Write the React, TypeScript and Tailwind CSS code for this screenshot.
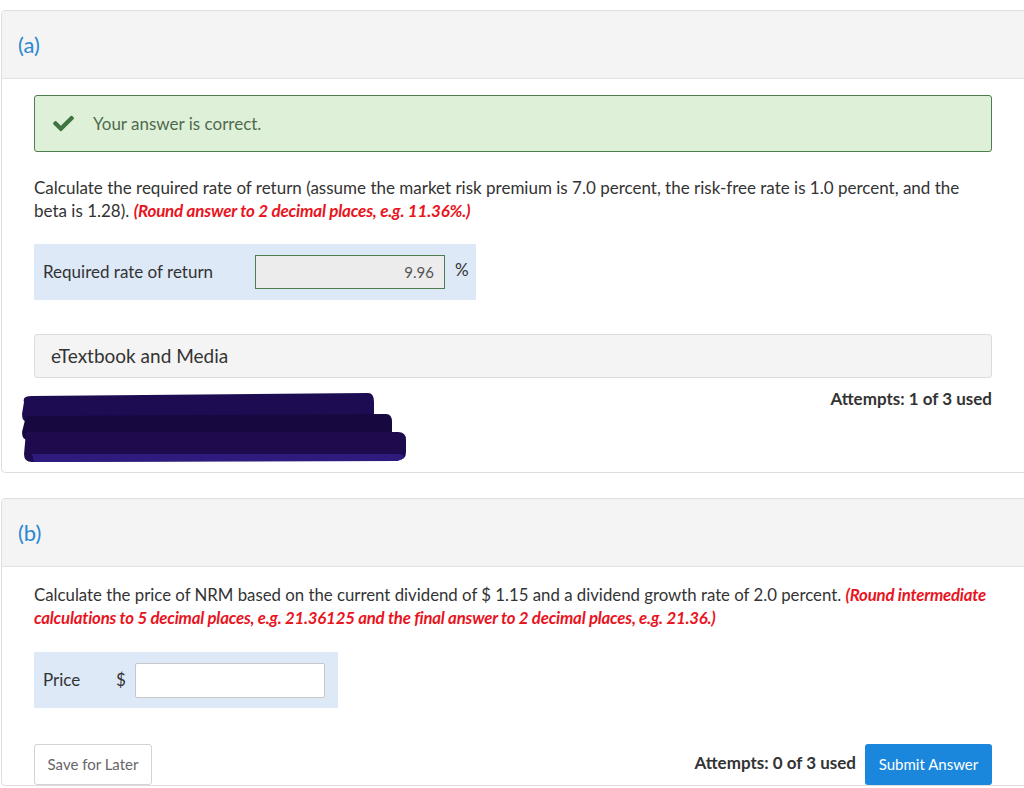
import { FaCheck } from 'react-icons/fa';

function Scribble() {
    // hand-drawn redaction marks over the student's name
    return (
        <svg width="400" height="72" viewBox="0 0 400 72" className="block">
            <path d="M6 10 Q4 4 14 4 L350 1 Q356 1 356 10 L356 22 Q356 28 350 28 L10 30 Q4 30 4 22 Z" fill="#1e0c52" />
            <path d="M8 24 L368 22 Q374 22 374 30 L374 40 Q374 46 368 46 L10 48 Q4 48 4 40 Z" fill="#170840" />
            <path d="M8 40 L380 40 Q388 40 388 48 L388 60 Q388 68 380 68 L14 70 Q6 70 6 62 Z" fill="#1d0b4d" />
            <path d="M14 62 L380 62 Q386 62 386 66 L380 69 L16 70 Z" fill="#2f1b7e" />
        </svg>
    );
}

function CardHeader({ label }: { label: string }) {
    return (
        <div className="h-[68px] flex items-center pl-4 bg-[#f4f4f4] border-b border-[#e3e3e3]">
            <span className="text-[22px] text-[#2b88cf]">{label}</span>
        </div>
    );
}

export default function App() {
    return (
        <div className="w-[1024px] h-[788px] overflow-hidden bg-white text-[#333] font-['Lato','Noto_Sans',sans-serif]">
            <div className="pt-[10px] pl-px">
                {/* Part (a) */}
                <div className="w-[1040px] border border-[#dedede] rounded-[4px] overflow-hidden">
                    <CardHeader label="(a)" />
                    <div className="pl-8 pt-4 pb-[8px] w-[990px]">
                        <div className="h-[57px] flex items-center bg-[#dff0d8] border border-[#4e7d4e] rounded-[3px] pl-[18px]">
                            <FaCheck className="text-[#3f7440] text-[21px]" />
                            <span className="ml-[19px] text-[17px] text-[#4f6b4f]">Your answer is correct.</span>
                        </div>
                        <p className="mt-6 text-[17px] leading-[23px] text-[#333]">
                            Calculate the required rate of return (assume the market risk premium is 7.0 percent, the risk-free rate is 1.0 percent, and the beta is 1.28).{' '}
                            <span className="font-bold italic text-[#e8141e] tracking-[-0.2px]">(Round answer to 2 decimal places, e.g. 11.36%.)</span>
                        </p>
                        <div className="mt-[22px] w-[442px] h-[56px] bg-[#dde9f7] flex items-center pl-[9px]">
                            <span className="w-[212px] text-[17px]">Required rate of return</span>
                            <div className="w-[190px] h-[34px] bg-[#ececec] border border-[#4e7d4e] flex items-center justify-end pr-[10px] text-[15px] text-[#555]">
                                9.96
                            </div>
                            <span className="ml-[10px] -mt-[4px] text-[17px]">%</span>
                        </div>
                        <div className="mt-[34px] h-[44px] bg-[#f4f4f4] border border-[#dcdcdc] rounded-[3px] flex items-center pl-4">
                            <span className="text-[19px] text-[#333]">eTextbook and Media</span>
                        </div>
                        <div className="flex justify-between -ml-4">
                            <div className="mt-[14px]">
                                <Scribble />
                            </div>
                            <span className="mt-[8px] text-[17px] font-bold text-[#333]">Attempts: 1 of 3 used</span>
                        </div>
                    </div>
                </div>

                {/* Part (b) */}
                <div className="mt-[25px] w-[1040px] border border-[#dedede] rounded-[4px] overflow-hidden">
                    <CardHeader label="(b)" />
                    <div className="pl-8 pt-[16px] w-[990px]">
                        <p className="w-[964px] text-[16.8px] leading-[23px] text-[#333]">
                            Calculate the price of NRM based on the current dividend of $ 1.15 and a dividend growth rate of 2.0 percent.{' '}
                            <span className="font-bold italic text-[#e8141e] tracking-[-0.2px]">
                                (Round intermediate calculations to 5 decimal places, e.g. 21.36125 and the final answer to 2 decimal places, e.g. 21.36.)
                            </span>
                        </p>
                        <div className="mt-[23px] w-[304px] h-[56px] bg-[#dde9f7] flex items-center pl-[9px]">
                            <span className="w-[73px] text-[17px]">Price</span>
                            <span className="w-[19px] text-[17px]">$</span>
                            <div className="w-[190px] h-[35px] bg-white border border-[#c8c8c8] rounded-[2px]" />
                        </div>
                        <div className="mt-[36px] flex items-center">
                            <button className="w-[118px] h-[41px] border border-[#d3d3d3] rounded-[3px] bg-white text-[15px] text-[#666]">
                                Save for Later
                            </button>
                            <div className="flex-1" />
                            <span className="text-[17px] font-bold text-[#333] -mt-[4px]">Attempts: 0 of 3 used</span>
                            <button className="ml-[9px] w-[127px] h-[41px] rounded-[3px] bg-[#1a87dd] text-[15px] text-white">
                                Submit Answer
                            </button>
                        </div>
                    </div>
                </div>
            </div>
        </div>
    );
}
